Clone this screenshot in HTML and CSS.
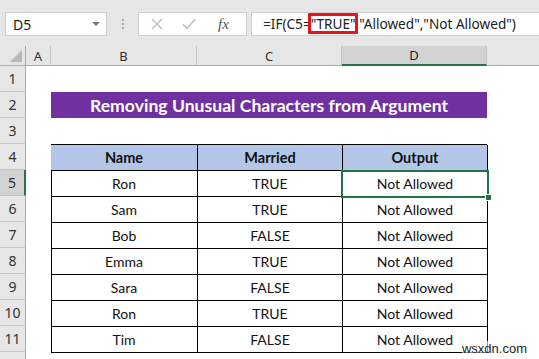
FILE: index.html
```html
<!DOCTYPE html>
<html lang="en">
<head>
    <meta charset="UTF-8">
    <meta name="viewport" content="width=device-width, initial-scale=1.0">
    <title>Removing Unusual Characters from Argument</title>
    <link rel="stylesheet" href="styles.css">
</head>
<body>
    <div class="app">
        <div class="formula-bar">
            <div class="name-box">
                <span>D5</span>
                <span class="caret"></span>
            </div>
            <div class="grip"><i></i><i></i><i></i></div>
            <div class="fx-buttons">
                <svg width="12" height="12" viewBox="0 0 12 12"><path d="M1 1 L11 11 M11 1 L1 11" stroke="#b8b8b8" stroke-width="1.4" fill="none"/></svg>
                <svg width="14" height="12" viewBox="0 0 14 12"><path d="M1 6.5 L5 10.5 L13 1.5" stroke="#b8b8b8" stroke-width="1.4" fill="none"/></svg>
                <span class="fx">fx</span>
            </div>
            <div class="formula">=IF(C5=<span class="hl">"TRUE"</span>,"Allowed","Not Allowed")</div>
        </div>

        <div class="sheet">
            <div class="corner"><span></span></div>
            <div class="col-head">A</div>
            <div class="col-head">B</div>
            <div class="col-head">C</div>
            <div class="col-head selected">D</div>
            <div class="col-head last"></div>

            <div class="title">Removing Unusual Characters from Argument</div>

            <div class="data">
                <div class="cell head">Name</div>
                <div class="cell head">Married</div>
                <div class="cell head">Output</div>

                <div class="cell">Ron</div>
                <div class="cell">TRUE</div>
                <div class="cell active">Not Allowed</div>

                <div class="cell">Sam</div>
                <div class="cell">TRUE</div>
                <div class="cell">Not Allowed</div>

                <div class="cell">Bob</div>
                <div class="cell">FALSE</div>
                <div class="cell">Not Allowed</div>

                <div class="cell">Emma</div>
                <div class="cell">TRUE</div>
                <div class="cell">Not Allowed</div>

                <div class="cell">Sara</div>
                <div class="cell">FALSE</div>
                <div class="cell">Not Allowed</div>

                <div class="cell">Ron</div>
                <div class="cell">TRUE</div>
                <div class="cell">Not Allowed</div>

                <div class="cell">Tim</div>
                <div class="cell">FALSE</div>
                <div class="cell">Not Allowed</div>
            </div>

            <div class="row-head">1</div>
            <div class="row-head">2</div>
            <div class="row-head">3</div>
            <div class="row-head">4</div>
            <div class="row-head selected">5</div>
            <div class="row-head">6</div>
            <div class="row-head">7</div>
            <div class="row-head">8</div>
            <div class="row-head">9</div>
            <div class="row-head">10</div>
            <div class="row-head">11</div>
            <div class="row-head"></div>
        </div>

        <div class="watermark">wsxdn.com</div>
    </div>
</body>
</html>
```

FILE: styles.css
```css
:root {
    --chrome: #e6e6e6;
    --head-line: #c4c4c4;
    --excel-green: #217346;
    --purple: #7030a0;
    --header-blue: #b4c6e7;
}

body {
    margin: 0;
    padding: 0;
    font-family: "Noto Sans", "Open Sans", sans-serif;
    background: #fff;
}

.app {
    position: relative;
    width: 539px;
    height: 359px;
    overflow: hidden;
    background: #fff;
}

/* formula bar */
.formula-bar {
    display: flex;
    align-items: center;
    height: 46px;
    padding: 12px 0 10px 5px;
    box-sizing: border-box;
    background: var(--chrome);
}

.name-box,
.fx-buttons,
.formula {
    height: 24px;
    box-sizing: border-box;
    background: #fff;
    border: 1px solid #d0d0d0;
}

.name-box {
    display: flex;
    align-items: center;
    justify-content: space-between;
    width: 102px;
    padding: 0 6px 0 7px;
    font-size: 14px;
    color: #222;
}

.caret {
    width: 0;
    height: 0;
    border-left: 4px solid transparent;
    border-right: 4px solid transparent;
    border-top: 4px solid #777;
}

.grip {
    display: flex;
    flex-direction: column;
    gap: 2px;
    width: 31px;
    align-items: center;
}

.grip i {
    width: 2px;
    height: 2px;
    background: #a8a8a8;
}

.fx-buttons {
    display: flex;
    align-items: center;
    width: 109px;
    padding-left: 12px;
    gap: 19px;
}

.fx {
    font-family: "Liberation Serif", serif;
    font-style: italic;
    font-size: 15px;
    color: #555;
    margin-left: 3px;
}

.formula {
    flex: 1;
    margin-left: 4px;
    border-right: none;
    padding-left: 11px;
    font-size: 13.6px;
    line-height: 22px;
    color: #222;
    white-space: nowrap;
}

.hl {
    position: relative;
}

.hl::after {
    content: "";
    position: absolute;
    left: -3px;
    right: -2px;
    top: -1px;
    bottom: -1px;
    border: 3px solid #e8141b;
    border-radius: 1px;
}

/* sheet grid */
.sheet {
    display: grid;
    grid-template-columns: 26px 25px 146px 145px 145px 1fr;
    grid-template-rows: 20px repeat(12, 26px);
}

.corner,
.col-head,
.row-head {
    background: var(--chrome);
    box-sizing: border-box;
    color: #333;
    font-size: 13px;
}

.corner {
    border-right: 1px solid #ababab;
    border-bottom: 1px solid #ababab;
    display: flex;
    align-items: flex-end;
    justify-content: flex-end;
    padding: 0 3px 3px 0;
}

.corner span {
    width: 0;
    height: 0;
    border-left: 12px solid transparent;
    border-bottom: 12px solid #b8b8b8;
}

.col-head {
    display: flex;
    align-items: center;
    justify-content: center;
    border-right: 1px solid var(--head-line);
    border-bottom: 1px solid #ababab;
}

.col-head.selected {
    background: #d2d2d2;
    border-bottom: 2px solid var(--excel-green);
    color: #222;
}

.col-head.last {
    border-right: none;
}

.row-head {
    grid-column: 1;
    display: flex;
    align-items: center;
    justify-content: center;
    border-right: 1px solid #ababab;
    border-bottom: 1px solid var(--head-line);
    font-size: 14px;
}

.row-head.selected {
    background: #d2d2d2;
    border-right: 2px solid var(--excel-green);
}

.title {
    grid-column: 3 / 6;
    grid-row: 3;
    display: flex;
    align-items: center;
    justify-content: center;
    background: var(--purple);
    color: #fff;
    font-family: Lato, "Noto Sans", sans-serif;
    font-weight: bold;
    font-size: 17.6px;
}

.data {
    grid-column: 3 / 6;
    grid-row: 5 / 13;
    display: grid;
    grid-template-columns: 146px 145px 145px;
    grid-auto-rows: 26px;
    border-top: 1px solid #000;
    border-left: 1px solid #000;
    box-sizing: border-box;
    margin-bottom: -1px;
}

.cell {
    display: flex;
    align-items: center;
    justify-content: center;
    border-right: 1px solid #000;
    border-bottom: 1px solid #000;
    font-family: Lato, "Noto Sans", sans-serif;
    font-size: 14px;
    color: #111;
    box-sizing: border-box;
}

.cell:nth-child(3n+1) {
    margin-left: -1px;
}

.cell.head {
    background: var(--header-blue);
    font-weight: bold;
    font-size: 14.5px;
}

.cell.active {
    position: relative;
}

.cell.active::before {
    content: "";
    position: absolute;
    left: -2px;
    top: -1px;
    right: -2px;
    bottom: -2px;
    border: 2px solid var(--excel-green);
}

.cell.active::after {
    content: "";
    position: absolute;
    right: -5px;
    bottom: -5px;
    width: 5px;
    height: 5px;
    background: var(--excel-green);
    border: 1px solid #fff;
}

.watermark {
    position: absolute;
    right: 12px;
    bottom: 3px;
    font-family: "Liberation Sans", sans-serif;
    font-size: 13px;
    color: #222;
    background: rgba(255, 255, 255, 0.6);
}
```
